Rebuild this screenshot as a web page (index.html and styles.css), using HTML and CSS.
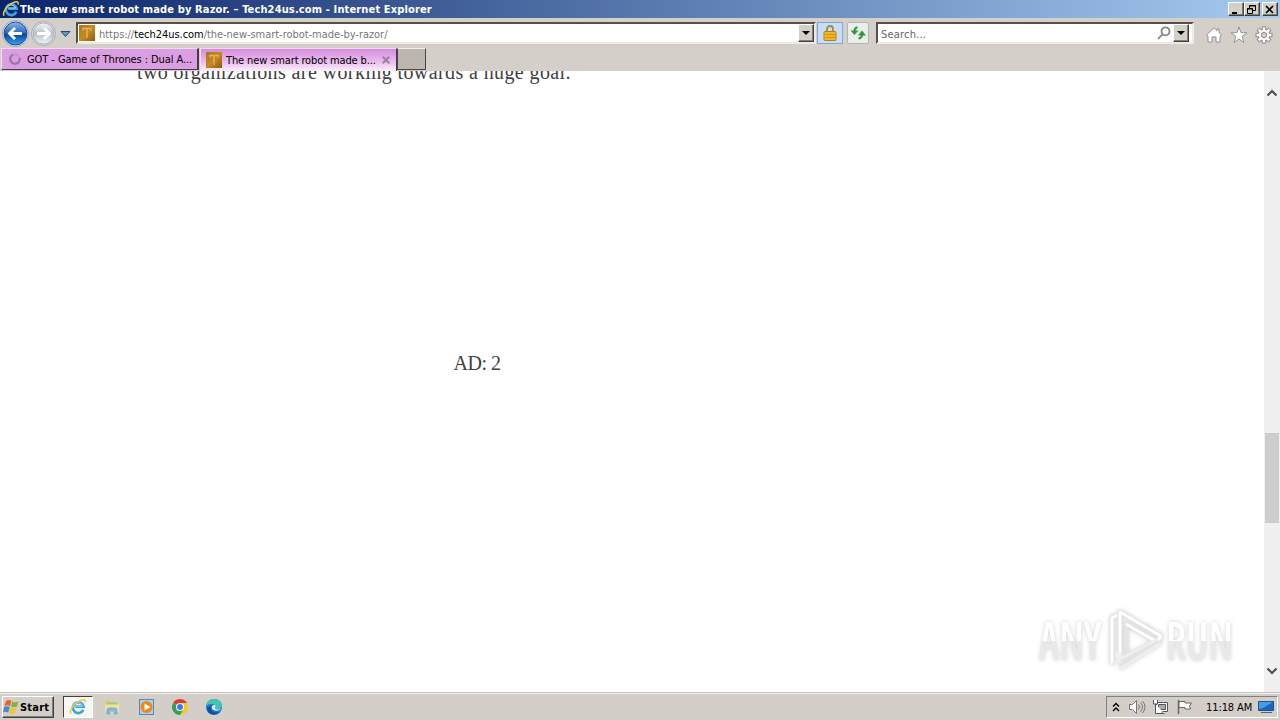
FILE: index.html
```html
<!DOCTYPE html>
<html lang="en">
<head>
    <meta charset="UTF-8">
    <meta name="viewport" content="width=device-width, initial-scale=1.0">
    <title>The new smart robot made by Razor. – Tech24us.com</title>
    <link rel="stylesheet" href="styles.css">
</head>
<body>

<!-- Shared icons -->
<svg class="defs" width="0" height="0">
    <defs>
        <linearGradient id="blueBall" x1="0" y1="0" x2="0" y2="1">
            <stop offset="0" stop-color="#8fb5e6"/>
            <stop offset=".48" stop-color="#2866bd"/>
            <stop offset=".52" stop-color="#0b439d"/>
            <stop offset="1" stop-color="#35a3ee"/>
        </linearGradient>
        <linearGradient id="greyBall" x1="0" y1="0" x2="0" y2="1">
            <stop offset="0" stop-color="#f4f5f8"/>
            <stop offset=".5" stop-color="#b9bfca"/>
            <stop offset="1" stop-color="#f2f4f7"/>
        </linearGradient>
        <linearGradient id="gold" x1="0" y1="0" x2="1" y2="1">
            <stop offset="0" stop-color="#a8741a"/>
            <stop offset=".5" stop-color="#c58b22"/>
            <stop offset="1" stop-color="#8f5a0c"/>
        </linearGradient>
    </defs>
    <symbol id="ie" viewBox="0 0 18 18">
        <path d="M14.3 11.8a5.4 5.4 0 1 1 .3-3.1H6.2" fill="none" stroke="#3ba4e2" stroke-width="2.700"/>
        <path d="M5 6.500a5 5 0 0 1 8.500 1.600H6.400" fill="none" stroke="#9adcf9" stroke-width="1"/>
        <path d="M2.200 15.800C-.2 13 4.500 6.200 9.500 3.400 13.500 1 17.200.8 16 4.600" fill="none" stroke="#f0c93a" stroke-width="1.500"/>
    </symbol>
    <symbol id="favicon" viewBox="0 0 16 16">
        <rect width="16" height="16" fill="url(#gold)"/>
        <path d="M4 5.500V3.500h8v2M8 3.500V13" fill="none" stroke="#e2b45c" stroke-width="1.400"/>
    </symbol>
</svg>

<!-- Title Bar -->
<div class="title-bar">
    <svg class="title-icon" width="18" height="18"><use href="#ie"/></svg>
    <span class="title-text">The new smart robot made by Razor. – Tech24us.com - Internet Explorer</span>
    <div class="window-buttons">
        <button class="win-btn"><svg width="13" height="11"><path d="M3 8h5v2H3z"/></svg></button>
        <button class="win-btn"><svg width="13" height="11" fill="none" stroke="#000"><path d="M4.500 4V1.500h6v5H8M4 2h7M2.500 4.500h5v5h-5zM2 5h6"/></svg></button>
        <button class="win-btn close-btn"><svg width="13" height="11" fill="none" stroke="#000" stroke-width="1.700"><path d="M3 2l7 7M10 2L3 9"/></svg></button>
    </div>
</div>

<!-- Navigation Bar -->
<div class="nav-bar">
    <svg class="nav-round" width="76" height="30" viewBox="0 0 76 30">
        <circle cx="15.500" cy="15.500" r="13" fill="#eef2f8" stroke="#9aa3b3"/>
        <circle cx="15.500" cy="15.500" r="11.500" fill="url(#blueBall)" stroke="#1d4d92"/>
        <path d="M22 15.500H10M15 10l-5.500 5.500L15 21" fill="none" stroke="#fff" stroke-width="2.800"/>
        <circle cx="43.500" cy="15.500" r="12" fill="#f0f1f4" stroke="#a0a5ae"/>
        <circle cx="43.500" cy="15.500" r="10.500" fill="url(#greyBall)" stroke="#a9aeb8"/>
        <path d="M37 15.500h12M44 10l5.500 5.500L44 21" fill="none" stroke="#fff" stroke-width="2.800"/>
        <path d="M61 13.500h9l-4.500 5z" fill="#5c9bc4" stroke="#174d78"/>
    </svg>
    <div class="field address">
        <svg class="field-icon" width="16" height="16"><use href="#favicon"/></svg>
        <span class="url"><span class="dim">https://</span><span class="host">tech24us.com</span><span class="dim path">/the-new-smart-robot-made-by-razor/</span></span>
        <button class="drop-btn"></button>
    </div>
    <button class="tool-btn lock">
        <svg width="16" height="18" viewBox="0 0 16 18">
            <path d="M5 8V5a3 3 0 0 1 6 0v3" fill="none" stroke="#a38a45" stroke-width="1.800"/>
            <rect x="2" y="7.500" width="12" height="9" rx="1" fill="#efb625" stroke="#b8810f"/>
            <path d="M3 10.500h10M3 13.500h10" stroke="#cf9414"/>
        </svg>
    </button>
    <button class="tool-btn refresh">
        <svg width="18" height="16" viewBox="0 0 18 16">
            <path d="M8.500 2.500Q5.500 2.500 5.500 6M9.500 13.500Q13 13 13 10" fill="none" stroke="#32953a" stroke-width="2"/>
            <path d="M1.500 5.500h8l-4 4.500zM9 10.500h8L13 5.500z" fill="#32953a"/>
        </svg>
    </button>
    <div class="field search">
        <span class="placeholder">Search...</span>
        <svg class="search-icon" width="14" height="14" viewBox="0 0 14 14" fill="none" stroke="#858585" stroke-width="1.800"><circle cx="8.500" cy="5.300" r="4"/><path d="M5.500 8.300L1 12.800"/></svg>
        <button class="drop-btn"></button>
    </div>
    <div class="nav-tools">
        <svg width="18" height="18" viewBox="0 0 18 18" fill="#fff" stroke="#929292"><path d="M9 1.800L1.500 9l1.500 1.200V16h4v-5h4v5h4v-5.800L16.500 9 14 6.600V3h-2v1.700z"/></svg>
        <svg width="18" height="18" viewBox="0 0 18 18" fill="#fff" stroke="#929292"><path d="M9 1l2 5.700 6 .1-4.800 3.600 1.700 6L9 13l-4.900 3.400 1.700-6L1 6.800l6-.1z"/></svg>
        <svg width="18" height="18" viewBox="0 0 18 18" fill="none">
            <g stroke="#8e8e8e" stroke-width="4.400"><path d="M9 .5v17M.5 9h17M3 3l12 12M15 3L3 15"/></g>
            <circle cx="9" cy="9" r="6.300" fill="#8e8e8e"/>
            <g stroke="#fff" stroke-width="2.400"><path d="M9 1.500v15M1.500 9h15M3.700 3.700l10.600 10.600M14.300 3.700L3.700 14.300"/></g>
            <circle cx="9" cy="9" r="5.300" fill="#fff"/>
            <circle cx="9" cy="9" r="2.700" fill="#d5cfc9" stroke="#8e8e8e"/>
        </svg>
    </div>
</div>

<!-- Tabs -->
<div class="tab-bar">
    <div class="tab">
        <svg class="tab-icon" width="14" height="14" viewBox="0 0 14 14" fill="none" stroke-width="2.200"><circle cx="7" cy="7" r="4.700" stroke="#c797ca"/><path d="M5 2.700A4.700 4.700 0 1 0 11.500 6" stroke="#96789f"/></svg>
        <span class="tab-text">GOT - Game of Thrones : Dual A...</span>
    </div>
    <div class="tab active">
        <svg class="tab-icon" width="16" height="16"><use href="#favicon"/></svg>
        <span class="tab-text">The new smart robot made b...</span>
        <svg class="tab-close" width="8" height="8" viewBox="0 0 8 8" stroke="#98829c" stroke-width="2"><path d="M.7.7l6.600 6.600M7.300.7L.7 7.300"/></svg>
    </div>
    <div class="new-tab"></div>
</div>

<!-- Page -->
<div class="viewport">
    <div class="page">
        <p class="paragraph">two organizations are working towards a huge goal.</p>
        <p class="ad">AD: 2</p>
    </div>
    <div class="scrollbar">
        <svg class="arrow" width="12" height="8" viewBox="0 0 12 8"><path d="M1.500 6.500L6 2l4.500 4.500"/></svg>
        <div class="thumb"></div>
        <svg class="arrow" width="12" height="8" viewBox="0 0 12 8"><path d="M1.500 1.500L6 6l4.500-4.500"/></svg>
    </div>
    <div class="watermark">
        <span class="mark-text">ANY</span>
        <svg width="60" height="66" viewBox="0 0 60 66" fill="none" stroke-linejoin="round">
            <g stroke="#e3e3e3" stroke-width="5"><path d="M6 57V11l5-3M14 46V5l41 24-3 4M14 60l41-26"/><path d="M20 48V17l29 17-31 19"/></g>
            <g stroke="#fff" stroke-width="3"><path d="M6 57V11l5-3M14 46V5l41 24-3 4"/><path d="M20 17l29 17"/></g>
            <path d="M6 57l10-6 36-19M14 62l41-26" stroke="#eee" stroke-width="3"/>
        </svg>
        <span class="mark-text">RUN</span>
    </div>
</div>

<!-- Taskbar -->
<div class="taskbar">
    <button class="start-btn">
        <svg width="17" height="16" viewBox="0 0 17 16"><path d="M3 2q3-2 5.500 0L7 7.200Q4.500 5.500 1.500 7z" fill="#e8622c"/><path d="M9.300 2.500q3 1.500 6-.3L14 7.500q-3 1.500-6 0z" fill="#79b843"/><path d="M1.200 8q3-1.500 5.500.2L5.200 13.500q-2.500-1.700-5.200 0z" fill="#3f8bd2"/><path d="M7.500 8.600q3 1.500 6.100 0L12 14q-3 1.500-6 0z" fill="#f7c32e"/></svg>
        <span>Start</span>
    </button>
    <div class="pinned">
        <div class="pin running"><svg width="18" height="18"><use href="#ie"/></svg></div>
        <div class="pin"><svg width="18" height="18" viewBox="0 0 18 18"><path d="M2 2.500h5l1 1.500h7v9H2z" fill="#e5c868"/><path d="M4 4.500h10v4H4z" fill="#8fca9b"/><path d="M2 6.500h14V14H2z" fill="#f4e19a"/><path d="M4 16v-4q0-2 2-2h6q2 0 2 2v4h-2.500v-3h-5v3z" fill="#7fc0e2" stroke="#5898bd" stroke-width=".6"/></svg></div>
        <div class="pin"><svg width="18" height="18" viewBox="0 0 18 18"><rect x="2.500" y="1.500" width="14" height="15" fill="#a8d1ef" stroke="#4c8cbd"/><circle cx="9.500" cy="9" r="6" fill="#f28718"/><path d="M7.500 5.500l6 3.500-6 3.500z" fill="#fff"/></svg></div>
        <div class="pin"><svg width="18" height="18" viewBox="0 0 18 18"><path d="M9 9L2.070 5a8 8 0 0 1 13.860 0z" fill="#df3d31"/><path d="M9 9V5h6.930A8 8 0 0 1 9 17z" fill="#f8c92d"/><path d="M9 9l3 3-3 5A8 8 0 0 1 2.070 5z" fill="#34a053"/><circle cx="9" cy="9" r="4" fill="#fff"/><circle cx="9" cy="9" r="3" fill="#3a7ce8"/></svg></div>
        <div class="pin"><svg width="18" height="18" viewBox="0 0 18 18"><circle cx="9" cy="9" r="8" fill="#1877c9"/><path d="M1 8C2-1 16-1 17 7c0 5-6 5-7 3 2-3-3-6-9-2z" fill="#43c4b5"/><path d="M7 8c-3 3 0 8 7 6-3 4-10 3-12-2 0-3 3-4 5-4z" fill="#10509f"/><path d="M10 10c2-3-1-4-3-2-1 3 2 6 8 4l2-2c-2 2-6 2-7 0z" fill="#e3edf0"/></svg></div>
    </div>
    <div class="tray">
        <svg width="8" height="11" viewBox="0 0 8 11" fill="none" stroke="#000" stroke-width="1.400"><path d="M1 4.500l3-3 3 3M1 9l3-3 3 3"/></svg>
        <svg width="18" height="16" viewBox="0 0 18 16" fill="none" stroke="#777"><path d="M1.500 5.500h3l4-4v13l-4-4h-3z" fill="#fff"/><path d="M10.500 5.500q2 2.500 0 5M12.500 3.500q4 4.500 0 9M14.500 2q5 6 0 12"/></svg>
        <svg width="18" height="16" viewBox="0 0 18 16" fill="#fff" stroke="#555"><path d="M4.500 3.500h11v9h-11z"/><path d="M6.500 5.500h7v5h-7z" fill="#aaa"/><path d="M1.500 1v4h4V1M3.500 5v9.500h9M10 12.500v2"/></svg>
        <svg width="18" height="16" viewBox="0 0 18 16" fill="#fff" stroke="#666"><path d="M2.500 1v14" stroke-width="1.500"/><path d="M3 2.500h6v1.500h6.500l-2 3 1 3H9V8.500H3z"/></svg>
        <span class="clock">11:18 AM</span>
        <svg width="16" height="14" viewBox="0 0 16 14"><path d="M.5 1.500h15v9H.5z" fill="#1767be" stroke="#235183"/><path d="M1 2h14L5 8 1 9z" fill="#4a9be4"/><path d="M3 12.500h11" stroke="#44688d"/></svg>
    </div>
</div>

</body>
</html>
```
FILE: styles.css
```css
/* General Styles */
* {
    box-sizing: border-box;
}

body {
    margin: 0;
    width: 1280px;
    height: 720px;
    overflow: hidden;
    display: flex;
    flex-direction: column;
    background-color: #fff;
    color: #000;
    font-family: 'DejaVu Sans Condensed', 'DejaVu Sans', sans-serif;
    font-stretch: condensed;
    font-size: 11px;
    white-space: nowrap;
}

svg {
    display: block;
    flex: none;
}

button {
    padding: 0;
    border: 0;
    font-family: inherit;
}

.defs {
    position: absolute;
}

/* Title Bar */
.title-bar {
    height: 18px;
    flex: none;
    display: flex;
    align-items: center;
    padding: 0 2px;
    background: linear-gradient(to right, #0a246a, #a6caf0);
}

.title-text {
    color: #fff;
    font-weight: bold;
    letter-spacing: 0.14px;
}

.window-buttons {
    display: flex;
    margin-left: auto;
}

.win-btn,
.drop-btn {
    width: 16px;
    height: 14px;
    background-color: #d4d0c8;
    border: 1px solid;
    border-color: #fff #404040 #404040 #fff;
    box-shadow: inset -1px -1px #808080;
}

.close-btn {
    margin-left: 2px;
}

/* Navigation Bar */
.nav-bar {
    height: 30px;
    flex: none;
    display: flex;
    align-items: flex-start;
    background-color: #d5cfc9;
}

.field {
    display: flex;
    align-items: center;
    height: 22px;
    margin-top: 4px;
    background-color: #fff;
    border: 2px solid;
    border-color: #55504c #eee9e4 #eee9e4 #55504c;
}

.address {
    width: 740px;
    padding-left: 1px;
}

.url {
    display: flex;
    margin: 2px 0 0 4px;
    letter-spacing: -0.04px;
}

.dim {
    color: #777;
}

.drop-btn {
    height: 18px;
    margin-left: auto;
    display: flex;
    justify-content: center;
    align-items: center;
}

.drop-btn::before {
    content: "";
    border: 4px solid transparent;
    border-top-color: #000;
    border-bottom: 0;
}

.tool-btn {
    display: flex;
    justify-content: center;
    align-items: center;
    height: 22px;
    margin-top: 4px;
}

.lock {
    width: 26px;
    margin-left: 1px;
    background-color: #c9ddf6;
    border: 1px solid #7da7dc;
}

.refresh {
    width: 22px;
    margin-left: 4px;
    background-color: #e9eeec;
    border: 1px solid #b4b6b6;
    border-radius: 2px;
}

.search {
    width: 318px;
    margin-left: 7px;
}

.search .drop-btn {
    margin-left: 2px;
    margin-right: 3px;
}

.placeholder {
    margin: 2px 0 0 3px;
    color: #666;
    letter-spacing: 0.2px;
}

.search-icon {
    margin-left: auto;
}

.nav-tools {
    display: flex;
    gap: 7px;
    margin: 8px 0 0 11px;
}

/* Tabs */
.tab-bar {
    height: 23px;
    flex: none;
    display: flex;
    background-color: #d5cfc9;
}

.tab {
    display: flex;
    align-items: center;
    width: 198px;
    height: 22px;
    margin-left: 1px;
    padding-left: 6px;
    background-color: #dc9ee2;
    border: 1px solid;
    border-color: #f2d9f4 #453a49 #453a49 #f2d9f4;
    border-right-width: 2px;
}

.tab-text {
    margin: 1px 0 0 5px;
    letter-spacing: -0.08px;
}

.tab.active {
    width: 197px;
    height: 23px;
    padding-left: 5px;
    background: linear-gradient(to bottom, #d68cdc, #ebbdef 60%, #fbf0fc);
    border-bottom: 0;
    border-right-width: 1px;
}

.tab.active .tab-text {
    margin-left: 4px;
    letter-spacing: -0.12px;
}

.tab-close {
    margin-left: auto;
    margin-right: 6px;
}

.new-tab {
    width: 29px;
    height: 22px;
    background-color: #bdb6af;
    border: 1px solid;
    border-color: #eee #454545 #454545 #454545;
}

/* Page */
.viewport {
    position: relative;
    flex: 1;
    min-height: 0;
    display: flex;
}

.page {
    flex: 1;
    overflow: hidden;
    padding-left: 137px;
    color: #404040;
    font-family: 'Liberation Serif', serif;
    font-size: 20px;
    line-height: 32px;
}

.page p {
    margin: 0;
}

.page .paragraph {
    margin-top: -15px;
    letter-spacing: 0.4px;
}

.page .ad {
    margin-top: 259px;
    width: 680px;
    text-align: center;
    letter-spacing: -0.5px;
}

.scrollbar {
    width: 16px;
    display: flex;
    flex-direction: column;
    align-items: center;
    padding: 18px 0 17px;
    background-color: #f0f0f0;
}

.arrow {
    fill: none;
    stroke: #505050;
    stroke-width: 2.2;
}

.thumb {
    width: 14px;
    height: 90px;
    margin: 336px 0 auto;
    background-color: #cdcdcd;
}

/* Watermark */
.watermark {
    position: absolute;
    left: 1039px;
    top: 536px;
    display: flex;
    align-items: center;
    filter: drop-shadow(0 0 2px rgba(0, 0, 0, 0.18));
}

.mark-text {
    width: 90px;
    margin-right: -23px;
    font: 600 52px/66px 'Open Sans', sans-serif;
    font-stretch: condensed;
    color: transparent;
    background: linear-gradient(#fff 52%, #e9e9e9 52%);
    -webkit-background-clip: text;
    background-clip: text;
    transform: scaleX(0.8);
    transform-origin: left;
}

/* Taskbar */
.taskbar {
    height: 28px;
    flex: none;
    display: flex;
    align-items: center;
    padding: 1px 2px 0;
    background-color: #d4cec8;
    border-top: 1px solid #c6c2be;
    box-shadow: inset 0 1px #f4f1ed;
}

.start-btn {
    display: flex;
    align-items: center;
    width: 52px;
    height: 22px;
    color: #000;
    font-size: 11px;
    font-weight: bold;
    letter-spacing: 0.2px;
    background-color: #d4cec8;
    border: 1px solid;
    border-color: #fff #404040 #404040 #fff;
    box-shadow: inset -1px -1px #808080;
}

.pinned {
    display: flex;
    align-items: center;
    gap: 4px;
    margin-left: 9px;
}

.pin {
    width: 30px;
    height: 22px;
    display: flex;
    justify-content: center;
    align-items: center;
}

.running {
    background-color: #f7f6f4;
    border: 1px solid;
    border-color: #404040 #fff #fff #404040;
}

.tray {
    display: flex;
    align-items: center;
    gap: 6px;
    width: 172px;
    height: 22px;
    margin-left: auto;
    padding-left: 5px;
    border: 1px solid;
    border-color: #808080 #fff #fff #808080;
}

.tray svg:nth-child(2) {
    margin-left: 2px;
}

.clock {
    margin-left: 6px;
    letter-spacing: -0.1px;
}
```
